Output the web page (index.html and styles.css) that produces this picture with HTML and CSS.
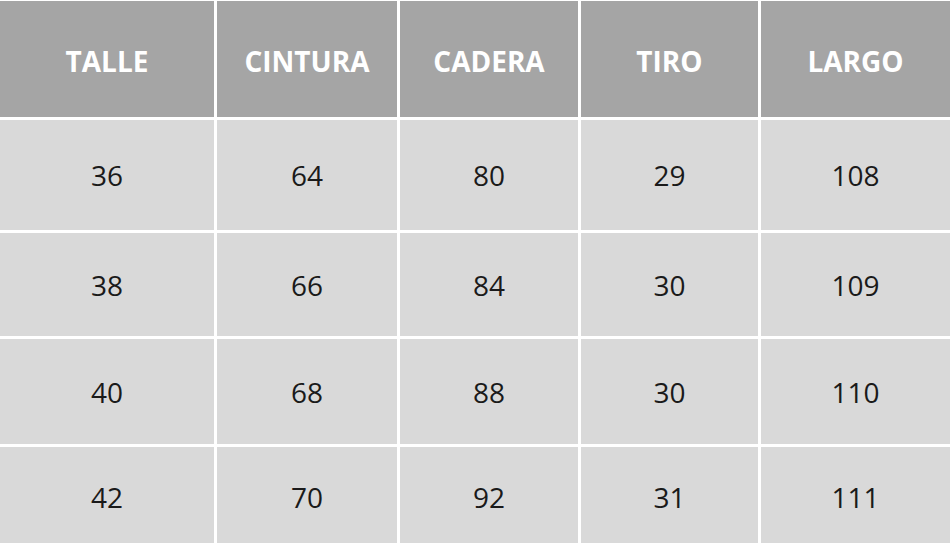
FILE: index.html
```html
<!DOCTYPE html>
<html lang="es">
<head>
<meta charset="utf-8">
<title>Tabla de talles</title>
<link rel="stylesheet" href="styles.css">
</head>
<body>
<div class="size-table">
  <div class="cell head">TALLE</div>
  <div class="cell head">CINTURA</div>
  <div class="cell head">CADERA</div>
  <div class="cell head">TIRO</div>
  <div class="cell head">LARGO</div>

  <div class="cell">36</div>
  <div class="cell">64</div>
  <div class="cell">80</div>
  <div class="cell">29</div>
  <div class="cell">108</div>

  <div class="cell">38</div>
  <div class="cell">66</div>
  <div class="cell">84</div>
  <div class="cell">30</div>
  <div class="cell">109</div>

  <div class="cell">40</div>
  <div class="cell">68</div>
  <div class="cell">88</div>
  <div class="cell">30</div>
  <div class="cell">110</div>

  <div class="cell">42</div>
  <div class="cell">70</div>
  <div class="cell">92</div>
  <div class="cell">31</div>
  <div class="cell">111</div>
</div>
</body>
</html>
```
FILE: styles.css
```css
html, body {
  margin: 0;
  padding: 0;
  background: #ffffff;
  overflow: hidden;
}

.size-table {
  display: grid;
  grid-template-columns: 214px 180px 178px 177px 1fr;
  grid-template-rows: 116px 110px 103px 105px 100px;
  column-gap: 3px;
  row-gap: 3px;
  padding-top: 1px;
  width: 950px;
  font-family: "Open Sans", "Liberation Sans", sans-serif;
}

.cell {
  display: flex;
  align-items: center;
  justify-content: center;
  background: #d9d9d9;
  color: #1a1a1a;
  font-size: 28px;
  font-weight: 400;
}

.head {
  background: #a5a5a5;
  color: #ffffff;
  font-size: 28px;
  font-weight: 700;
  padding-top: 3px;
}
```
